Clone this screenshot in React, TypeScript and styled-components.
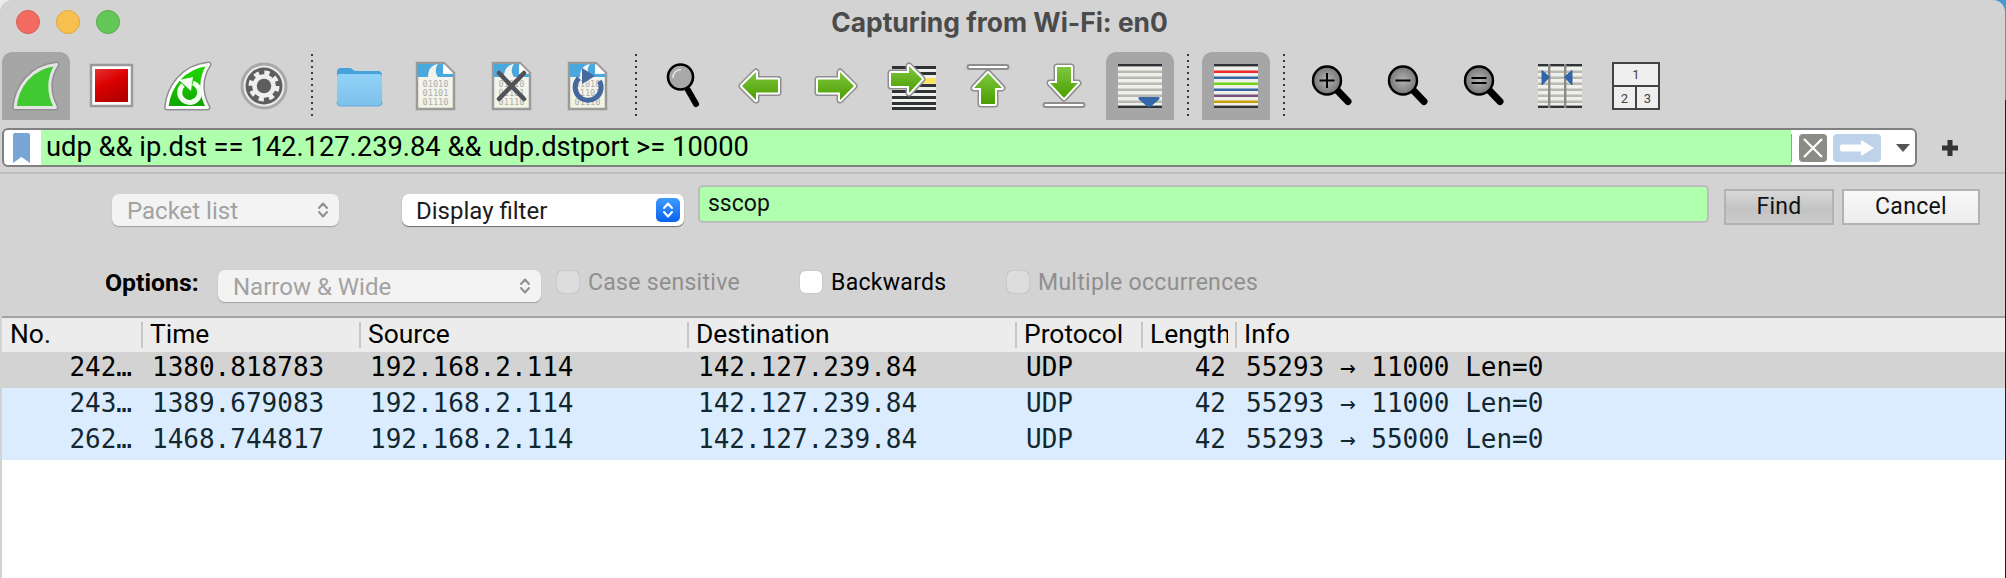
import * as React from 'react';
import styled, { createGlobalStyle } from 'styled-components';

const Global = createGlobalStyle`
  html, body { margin: 0; height: 100%; overflow: hidden; }
  body {
    background:
      linear-gradient(to right, #ececec 0 1000px, transparent 1000px),
      linear-gradient(#4a97cf 0 100px, #2a1e14 100px);
    font-family: Roboto, "Liberation Sans", sans-serif;
  }
`;

const Window = styled.div`
  width: 2005px;
  height: 578px;
  background: #d3d3d3;
  border-radius: 12px 12px 0 0;
  display: flex;
  flex-direction: column;
  overflow: hidden;
`;

const TitleBar = styled.div`
  height: 44px;
  padding: 0 16px;
  display: flex;
  align-items: center;
  margin-bottom: 8px;
`;

const Lights = styled.div`
  display: flex;
  gap: 16px;
  width: 104px;
`;

const Light = styled.span<{ $c: string; $b: string }>`
  width: 24px;
  height: 24px;
  border-radius: 50%;
  box-sizing: border-box;
  background: ${p => p.$c};
  border: 1px solid ${p => p.$b};
`;

const Title = styled.div`
  flex: 1;
  text-align: center;
  padding-right: 110px;
  font-family: Inter, sans-serif;
  font-weight: 700;
  font-size: 26.4px;
  color: #4b4b4b;
`;

const Toolbar = styled.div`
  display: flex;
  gap: 8px;
  padding-left: 2px;
  height: 68px;
`;

const ToolButton = styled.div<{ $active?: boolean }>`
  width: 68px;
  height: 68px;
  border-radius: 10px 10px 0 0;
  background: ${p => (p.$active ? '#a6a6a6' : 'transparent')};
  svg { display: block; }
`;

const Separator = styled.div`
  width: 12px;
  height: 64px;
  margin-top: 2px;
  background: repeating-linear-gradient(to bottom, #3a3a3a 0 2px, transparent 2px 6px) center / 2px 100% no-repeat;
`;

const FilterRow = styled.div`
  display: flex;
  align-items: center;
  margin-top: 8px;
  padding: 0 0 5px 2px;
  border-bottom: 2px solid #bdbdbd;
`;

const FilterBox = styled.div`
  width: 1915px;
  height: 39px;
  box-sizing: border-box;
  border: 2px solid #808080;
  border-radius: 6px;
  background: #fff;
  display: flex;
  align-items: center;
  overflow: hidden;
`;

const Bookmark = styled.div`
  width: 35px;
  display: flex;
  justify-content: center;
  padding-right: 2px;
`;

const FilterText = styled.div`
  flex: 1;
  height: 100%;
  background: #afffaf;
  padding-left: 5px;
  font-size: 27.3px;
  line-height: 35px;
  color: #000;
  white-space: pre;
`;

const FilterTools = styled.div`
  width: 124px;
  display: flex;
  align-items: center;
  gap: 6px;
  padding-left: 7px;
  box-sizing: border-box;
  border-left: 1px solid #9a9a9a;
`;

const ClearBox = styled.div`
  width: 28px;
  height: 28px;
  border-radius: 4px;
  background: #8c8c86;
`;

const ApplyBox = styled.div`
  width: 48px;
  height: 28px;
  border-radius: 4px;
  background: #bed3ea;
`;

const Caret = styled.div`
  width: 0;
  height: 0;
  margin-left: 9px;
  border-left: 7px solid transparent;
  border-right: 7px solid transparent;
  border-top: 8px solid #555;
`;

const PlusWrap = styled.div`
  margin-left: 24px;
  height: 18px;
  svg { display: block; }
`;

const FindBar = styled.div`
  padding-bottom: 14px;
`;

const FindRow = styled.div`
  display: flex;
  align-items: flex-start;
  padding: 11px 25px 0 112px;
`;

const OptionRow = styled.div`
  display: flex;
  align-items: flex-start;
  margin-top: 44px;
  padding-left: 105px;
`;

const Select = styled.div<{ $width: number; $off?: boolean; $left?: number; $top?: number }>`
  width: ${p => p.$width}px;
  height: 32px;
  margin-top: ${p => p.$top ?? 0}px;
  margin-left: ${p => p.$left ?? 0}px;
  box-sizing: border-box;
  padding: 0 4px 0 ${p => (p.$off ? 15 : 14)}px;
  border-radius: 7px;
  background: ${p => (p.$off ? '#f3f3f3' : '#fff')};
  box-shadow: 0 1px 1px rgba(0, 0, 0, ${p => (p.$off ? 0.25 : 0.5)});
  color: ${p => (p.$off ? '#a2a2a2' : '#1c1c1c')};
  font-size: 24px;
  line-height: 35px;
  display: flex;
  align-items: flex-start;
  justify-content: space-between;
`;

const Stepper = styled.div<{ $on?: boolean }>`
  width: 24px;
  height: 24px;
  margin-top: 4px;
  border-radius: 5px;
  background: ${p => (p.$on ? 'linear-gradient(#3f9bff, #0a62f0)' : 'transparent')};
  svg { display: block; }
`;

const FindInput = styled.div`
  flex: 1;
  height: 38px;
  margin-left: 14px;
  box-sizing: border-box;
  border: 2px solid #bcbcbc;
  border-radius: 5px;
  background: #afffaf;
  padding-left: 8px;
  font-size: 23px;
  line-height: 34px;
  color: #111;
`;

const FindButton = styled.div<{ $width: number; $plain?: boolean }>`
  width: ${p => p.$width}px;
  height: 36px;
  margin: 4px 0 0 ${p => (p.$plain ? 8 : 15)}px;
  box-sizing: border-box;
  border: 2px solid #b2b2b2;
  background: ${p => (p.$plain ? 'linear-gradient(#f8f8f8, #ececec)' : 'linear-gradient(#d8d8d8, #c2c2c2 60%, #cccccc)')};
  color: #111;
  font-size: 23px;
  line-height: 32px;
  letter-spacing: 0.3px;
  text-align: center;
`;

const OptionsLabel = styled.div`
  width: 94px;
  margin-right: 19px;
  font-weight: 700;
  font-size: 24.8px;
  line-height: 26px;
  color: #000;
  white-space: nowrap;
`;

const CheckItem = styled.div<{ $width: number; $off?: boolean; $left?: number }>`
  width: ${p => p.$width}px;
  height: 24px;
  margin-left: ${p => p.$left ?? 0}px;
  display: flex;
  align-items: center;
  gap: 9px;
  font-size: 23px;
  letter-spacing: 0.3px;
  color: ${p => (p.$off ? '#8f8f8f' : '#000')};
`;

const CheckBox = styled.span<{ $off?: boolean }>`
  width: 22px;
  height: 22px;
  border-radius: 5px;
  background: ${p => (p.$off ? '#dddddd' : '#fff')};
  box-shadow: 0 0 1px rgba(0, 0, 0, 0.4);
`;

const Table = styled.div`
  flex: 1;
  margin-left: 2px;
  background: #fff;
  border-top: 2px solid #a3a3a3;
`;

const columns = '139px 218px 328px 328px 126px 94px 1fr';

const HeaderRow = styled.div`
  display: grid;
  grid-template-columns: ${columns};
  height: 34px;
  align-items: center;
  background: #ececec;
`;

const HeaderCell = styled.div<{ $first?: boolean }>`
  height: 26px;
  border-left: ${p => (p.$first ? 'none' : '2px solid #c6c6c6')};
  padding: 0 7px 0 ${p => (p.$first ? 8 : 7)}px;
  font-size: 26.4px;
  color: #000;
`;

const HeaderLabel = styled.span`
  display: block;
  height: 31px;
  margin-top: -3px;
  line-height: 31px;
  overflow: hidden;
  white-space: nowrap;
`;

const Row = styled.div<{ $marked?: boolean }>`
  display: grid;
  grid-template-columns: ${columns};
  height: 36px;
  background: ${p => (p.$marked ? '#d3d3d3' : '#daecfe')};
  color: ${p => (p.$marked ? '#000' : '#12272e')};
  font-family: "DejaVu Sans Mono", monospace;
  font-size: 26px;
  line-height: 31px;
`;

const Cell = styled.div<{ $right?: boolean }>`
  text-align: ${p => (p.$right ? 'right' : 'left')};
  padding: 0 ${p => (p.$right ? 9 : 0)}px 0 ${p => (p.$right ? 0 : 11)}px;
  white-space: pre;
`;

const HiddenDefs = styled.svg`
  position: absolute;
  width: 0;
  height: 0;
`;

const Box: React.FC<{ children: React.ReactNode }> = ({ children }) => (
  <svg width="68" height="68" viewBox="0 0 68 68">{children}</svg>
);

const finPath = 'M13 55.5C15 35 29 15 54.5 12.5C46 25 45.5 41 53.5 55.5Z';

const Fin: React.FC<{ fill: string; edge: string }> = ({ fill, edge }) => (
  <>
    <path d={finPath} fill="none" stroke="#8f8f8f" strokeWidth="6" strokeLinejoin="round" />
    <path d={finPath} fill={fill} stroke={edge} strokeWidth="3" strokeLinejoin="round" />
  </>
);

const Arrow: React.FC<{ d: string }> = ({ d }) => (
  <>
    <path d={d} fill="none" stroke="#8e8e8e" strokeWidth="7" strokeLinejoin="round" />
    <path d={d} fill="none" stroke="#fff" strokeWidth="4" strokeLinejoin="round" />
    <path d={d} fill="url(#arrowGreen)" />
  </>
);

const Rail: React.FC<{ y: number }> = ({ y }) => (
  <rect x="13.5" y={y} width="41" height="4" rx="2" fill="#fff" stroke="#8e8e8e" strokeWidth="2" />
);

const Doc: React.FC = () => (
  <>
    <path d="M15 11H42L52 21V57H15Z" fill="url(#docPaper)" stroke="#9a9a9a" strokeWidth="2.5" />
    <path d="M16 12H41V22H51V25H16Z" fill="#4aa8dc" />
    <path d="M36 12C29 13 26 18 26 25H36C33 21 33 16 36 12Z" fill="#f2f2ee" />
    <path d="M42 12V21H51Z" fill="#fff" />
    <g fontFamily="'DejaVu Sans Mono', monospace" fontSize="8.6" fill="#adadad" textAnchor="middle">
      <text x="33.5" y="34.5">01010</text>
      <text x="33.5" y="43.5">01101</text>
      <text x="33.5" y="52.5">01110</text>
    </g>
  </>
);

const Sheet: React.FC<{ lines: string[]; w?: number }> = ({ lines, w = 2.5 }) => (
  <>
    <rect x="12" y="12" width="44" height="44" fill="#efefec" />
    <rect x="12" y="12" width="44" height="2.4" fill="#2f3336" />
    <rect x="12" y="53.6" width="44" height="2.4" fill="#2f3336" />
    {lines.map((c, i) => (
      <rect key={i} x="12" y={18.5 + i * 6} width="44" height={w} fill={c} />
    ))}
  </>
);

const grey = Array(6).fill('#b9b9b0');

const Glass: React.FC<{ sign?: 'plus' | 'minus' | 'equal' }> = ({ sign }) => (
  <>
    <path d="M39 38L50 49.5" stroke="#000" strokeWidth="7" strokeLinecap="round" />
    <circle cx="29" cy="28.5" r="14" fill="url(#glassGrey)" stroke="#000" strokeWidth="2.4" />
    {sign === 'plus' && <path d="M21.5 28.5H36.5M29 21V36" stroke="#000" strokeWidth="2" />}
    {sign === 'minus' && <path d="M21.5 28.5H36.5" stroke="#000" strokeWidth="2" />}
    {sign === 'equal' && <path d="M21.5 26H36.5M21.5 31H36.5" stroke="#000" strokeWidth="2" />}
  </>
);

const StepIcon: React.FC<{ color: string }> = ({ color }) => (
  <svg width="24" height="24" viewBox="0 0 24 24">
    <path d="M8 10L12 5.5L16 10M8 14L12 18.5L16 14" fill="none" stroke={color} strokeWidth="2" strokeLinecap="round" strokeLinejoin="round" />
  </svg>
);

type Packet = { no: string; time: string; info: string; marked?: boolean };

const packets: Packet[] = [
  { no: '242…', time: '1380.818783', info: '55293 → 11000 Len=0', marked: true },
  { no: '243…', time: '1389.679083', info: '55293 → 11000 Len=0' },
  { no: '262…', time: '1468.744817', info: '55293 → 55000 Len=0' },
];

const headers = ['No.', 'Time', 'Source', 'Destination', 'Protocol', 'Length', 'Info'];

export default function App() {
  return (
    <Window>
      <Global />
      <HiddenDefs>
        <defs>
          <linearGradient id="arrowGreen" x1="0" y1="0" x2="0" y2="1">
            <stop offset="0" stopColor="#7fc63e" />
            <stop offset="1" stopColor="#4b9e00" />
          </linearGradient>
          <linearGradient id="stopRed" x1="0" y1="0" x2="0.5" y2="1">
            <stop offset="0" stopColor="#e23434" />
            <stop offset="0.5" stopColor="#dc0000" />
            <stop offset="1" stopColor="#b40000" />
          </linearGradient>
          <linearGradient id="finGreen" x1="0" y1="0" x2="0" y2="1">
            <stop offset="0" stopColor="#1fdc00" />
            <stop offset="1" stopColor="#10a400" />
          </linearGradient>
          <linearGradient id="folderFront" x1="0" y1="0" x2="0" y2="1">
            <stop offset="0" stopColor="#92d2f6" />
            <stop offset="1" stopColor="#7cc2ec" />
          </linearGradient>
          <linearGradient id="docPaper" x1="0" y1="0" x2="0" y2="1">
            <stop offset="0" stopColor="#f6f6f6" />
            <stop offset="1" stopColor="#f3f3e2" />
          </linearGradient>
          <radialGradient id="glassGrey">
            <stop offset="0" stopColor="#b4b4b4" />
            <stop offset="1" stopColor="#777" />
          </radialGradient>
        </defs>
      </HiddenDefs>

      <TitleBar>
        <Lights>
          <Light $c="#f26a60" $b="#dc5a50" />
          <Light $c="#f8c04e" $b="#dea63c" />
          <Light $c="#62c757" $b="#50ad46" />
        </Lights>
        <Title>Capturing from Wi-Fi: en0</Title>
      </TitleBar>

      <Toolbar>
        <ToolButton $active>
          <Box><Fin fill="#41c931" edge="#e4e4e4" /></Box>
        </ToolButton>
        <ToolButton>
          <Box>
            <rect x="13" y="13" width="41" height="41" fill="#fff" stroke="#9a9a9a" strokeWidth="2.5" />
            <rect x="17" y="17" width="33" height="33" fill="url(#stopRed)" />
          </Box>
        </ToolButton>
        <ToolButton>
          <Box>
            <Fin fill="url(#finGreen)" edge="#fff" />
            <path d="M29 33A10 10 0 1 0 39 31" fill="none" stroke="#f2fff0" strokeWidth="5" />
            <path d="M25 28L39 25L37 39Z" fill="#f2fff0" />
          </Box>
        </ToolButton>
        <ToolButton>
          <Box>
            <circle cx="34" cy="34" r="22" fill="#ececec" stroke="#a8a8a8" strokeWidth="3" />
            <circle cx="34" cy="34" r="18.5" fill="#5e5e5e" />
            <circle cx="34" cy="34" r="13" fill="none" stroke="#eee" strokeWidth="5" strokeDasharray="5.1 5.1" />
            <circle cx="34" cy="34" r="9.5" fill="#5e5e5e" stroke="#eee" strokeWidth="4.5" />
          </Box>
        </ToolButton>
        <Separator />
        <ToolButton>
          <Box>
            <path d="M11 20A4 4 0 0 1 15 16H24C26 16 27 19 30 19H52A4 4 0 0 1 56 23V40H11Z" fill="#45a2dc" />
            <path d="M11 25A3 3 0 0 1 14 22H53A3 3 0 0 1 56 25V50A4 4 0 0 1 52 54H15A4 4 0 0 1 11 50Z" fill="url(#folderFront)" />
            <path d="M11 50A4 4 0 0 0 15 54H52A4 4 0 0 0 56 50" fill="none" stroke="#62a8d4" strokeWidth="1.2" />
          </Box>
        </ToolButton>
        <ToolButton><Box><Doc /></Box></ToolButton>
        <ToolButton>
          <Box>
            <Doc />
            <path d="M21 21L46 47M46 21L21 47" stroke="#505258" strokeWidth="4.5" strokeLinecap="round" />
          </Box>
        </ToolButton>
        <ToolButton>
          <Box>
            <Doc />
            <path d="M25 26A13 13 0 1 0 45.5 29" fill="none" stroke="#44699e" strokeWidth="5" />
            <path d="M28 16L41 24L28 32Z" fill="#44699e" />
          </Box>
        </ToolButton>
        <Separator />
        <ToolButton>
          <Box>
            <path d="M38 38L46 52" stroke="#000" strokeWidth="6" strokeLinecap="round" />
            <circle cx="30.5" cy="25" r="12.5" fill="#a8a8a8" stroke="#000" strokeWidth="2.6" />
            <path d="M23 26A8 8 0 0 1 31 17.5" fill="none" stroke="#e8e8e8" strokeWidth="1.4" />
          </Box>
        </ToolButton>
        <ToolButton><Box><Arrow d="M16 34L30 20V27.5H52V40.5H30V48Z" /></Box></ToolButton>
        <ToolButton><Box><Arrow d="M52 34L38 20V27.5H16V40.5H38V48Z" /></Box></ToolButton>
        <ToolButton>
          <Box>
            <rect x="14" y="14" width="44" height="44" fill="#efefec" />
            {[14, 20, 32, 38, 44, 50, 55].map(y => <rect key={y} x="14" y={y} width="44" height="3" fill="#2f3336" />)}
            <rect x="14" y="26" width="44" height="5.5" fill="#fce15a" />
            <Arrow d="M44 27L31 14V21H13V34H31V41Z" />
          </Box>
        </ToolButton>
        <ToolButton>
          <Box>
            <Rail y={13} />
            <Arrow d="M34 21L48 36H41V52H27V36H20Z" />
          </Box>
        </ToolButton>
        <ToolButton>
          <Box>
            <Arrow d="M34 46L48 31H41V15H27V31H20Z" />
            <Rail y={51} />
          </Box>
        </ToolButton>
        <ToolButton $active>
          <Box>
            <Sheet lines={grey} />
            <path d="M34 45H52C54 45 54 46.5 53 47.5L45.5 54C44 55.5 42 55.5 40.5 54L33 47.5C32 46.5 32 45 34 45Z" fill="#3467aa" />
          </Box>
        </ToolButton>
        <Separator />
        <ToolButton $active>
          <Box>
            <Sheet lines={['#ef2929', '#3465a4', '#73d216', '#3465a4', '#75507b', '#c4a000']} />
          </Box>
        </ToolButton>
        <Separator />
        <ToolButton><Box><Glass sign="plus" /></Box></ToolButton>
        <ToolButton><Box><Glass sign="minus" /></Box></ToolButton>
        <ToolButton><Box><Glass sign="equal" /></Box></ToolButton>
        <ToolButton>
          <Box>
            <Sheet lines={grey} />
            <rect x="22" y="12" width="2.4" height="44" fill="#8a8a86" />
            <rect x="38" y="12" width="2.4" height="44" fill="#8a8a86" />
            <path d="M16 18.5L23.5 25L16 33Z" fill="#2e65ab" stroke="#2e65ab" strokeLinejoin="round" />
            <path d="M46 18.5L38.5 25L46 33Z" fill="#2e65ab" stroke="#2e65ab" strokeLinejoin="round" />
          </Box>
        </ToolButton>
        <ToolButton>
          <Box>
            <rect x="11" y="11" width="46" height="46" fill="#efefef" stroke="#444" strokeWidth="2" />
            <path d="M11 34H57M34 34V57" stroke="#444" strokeWidth="2" />
            <g fontFamily="Roboto, sans-serif" fontSize="13" fill="#444" textAnchor="middle">
              <text x="34" y="27">1</text>
              <text x="22.5" y="50.5">2</text>
              <text x="45.5" y="50.5">3</text>
            </g>
          </Box>
        </ToolButton>
      </Toolbar>

      <FilterRow>
        <FilterBox>
          <Bookmark>
            <svg width="17" height="30" viewBox="0 0 17 30">
              <path d="M2 0H15A2 2 0 0 1 17 2V30L8.5 24L0 30V2A2 2 0 0 1 2 0Z" fill="#78a5d6" />
            </svg>
          </Bookmark>
          <FilterText>udp &amp;&amp; ip.dst == 142.127.239.84 &amp;&amp; udp.dstport &gt;= 10000</FilterText>
          <FilterTools>
            <ClearBox>
              <svg width="28" height="28" viewBox="0 0 28 28">
                <path d="M5 5L23 23M23 5L5 23" stroke="#fff" strokeWidth="2.2" />
              </svg>
            </ClearBox>
            <ApplyBox>
              <svg width="48" height="28" viewBox="0 0 48 28">
                <path d="M9 10.5H28V6L41 14L28 22V17.5H9A2 2 0 0 1 7 15.5V12.5A2 2 0 0 1 9 10.5Z" fill="#fff" />
              </svg>
            </ApplyBox>
            <Caret />
          </FilterTools>
        </FilterBox>
        <PlusWrap>
          <svg width="18" height="18" viewBox="0 0 18 18">
            <path d="M1 9H17M9 1V17" stroke="#333" strokeWidth="5" />
          </svg>
        </PlusWrap>
      </FilterRow>

      <FindBar>
        <FindRow>
          <Select $width={227} $off $top={9}>
            Packet list
            <Stepper><StepIcon color="#8f8f8f" /></Stepper>
          </Select>
          <Select $width={282} $left={63} $top={9}>
            Display filter
            <Stepper $on><StepIcon color="#fff" /></Stepper>
          </Select>
          <FindInput>sscop</FindInput>
          <FindButton $width={110}>Find</FindButton>
          <FindButton $width={138} $plain>Cancel</FindButton>
        </FindRow>
        <OptionRow>
          <OptionsLabel>Options:</OptionsLabel>
          <Select $width={323} $off>
            Narrow &amp; Wide
            <Stepper><StepIcon color="#8f8f8f" /></Stepper>
          </Select>
          <CheckItem $width={243} $off $left={16}>
            <CheckBox $off />
            Case sensitive
          </CheckItem>
          <CheckItem $width={207}>
            <CheckBox />
            Backwards
          </CheckItem>
          <CheckItem $width={300} $off>
            <CheckBox $off />
            Multiple occurrences
          </CheckItem>
        </OptionRow>
      </FindBar>

      <Table>
        <HeaderRow>
          {headers.map((h, i) => (
            <HeaderCell key={h} $first={i === 0}>
              <HeaderLabel>{h}</HeaderLabel>
            </HeaderCell>
          ))}
        </HeaderRow>
        {packets.map(p => (
          <Row key={p.no} $marked={p.marked}>
            <Cell $right>{p.no}</Cell>
            <Cell>{p.time}</Cell>
            <Cell>192.168.2.114</Cell>
            <Cell>142.127.239.84</Cell>
            <Cell>UDP</Cell>
            <Cell $right>42</Cell>
            <Cell>{p.info}</Cell>
          </Row>
        ))}
      </Table>
    </Window>
  );
}
